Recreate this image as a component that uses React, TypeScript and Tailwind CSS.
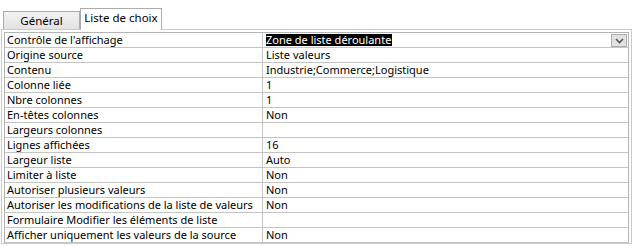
import React from "react";

const rows: [string, string][] = [
  ["Contrôle de l'affichage", "Zone de liste déroulante"],
  ["Origine source", "Liste valeurs"],
  ["Contenu", "Industrie;Commerce;Logistique"],
  ["Colonne liée", "1"],
  ["Nbre colonnes", "1"],
  ["En-têtes colonnes", "Non"],
  ["Largeurs colonnes", ""],
  ["Lignes affichées", "16"],
  ["Largeur liste", "Auto"],
  ["Limiter à liste", "Non"],
  ["Autoriser plusieurs valeurs", "Non"],
  ["Autoriser les modifications de la liste de valeurs", "Non"],
  ["Formulaire Modifier les éléments de liste", ""],
  ["Afficher uniquement les valeurs de la source", "Non"],
];

export default function App() {
  return (
    <div className="w-[638px] h-[246px] bg-white text-black text-[11px] leading-[14px] font-['Segoe_UI','Noto_Sans',sans-serif] overflow-hidden">
      <div className="flex items-end h-[29px] pl-[3px]">
        <div className="w-[77px] h-[18px] border border-b-0 border-[#acacac] bg-gradient-to-b from-[#f2f2f2] to-[#e3e3e3] flex items-center justify-center text-[11.5px]">
          Général
        </div>
        <div className="w-[82px] h-[22px] -mb-px relative z-10 border border-b-0 border-[#acacac] bg-white flex items-center justify-center pb-[3px] text-[11.5px]">
          Liste de choix
        </div>
      </div>
      <div className="ml-[1px] w-[631px] h-[215px] border border-[#c9c9c9] p-[2px]">
        <div className="border border-[#b4b4b4] border-b-0">
          {rows.map(([k, v], i) => (
            <div key={i} className="flex h-[15px] border-b border-[#c4c4c4]">
              <div className="w-[258px] h-[14px] shrink-0 border-r border-[#c4c4c4] pl-[2px] whitespace-nowrap">
                {k}
              </div>
              <div className="flex-1 h-[14px] pl-[3px] flex items-start whitespace-nowrap relative">
                {i === 0 ? (
                  <>
                    <span className="bg-black text-white pr-[1px] mt-[1px] leading-[12px]">{v}</span>
                    <div className="absolute right-[1px] top-[1px] w-[16px] h-[13px] border border-[#adadad] bg-[#e1e1e1] flex items-center justify-center">
                      <svg width="9" height="6" viewBox="0 0 9 6">
                        <path d="M1 1 L4.5 4.5 L8 1" stroke="#555" strokeWidth="1.6" fill="none" />
                      </svg>
                    </div>
                  </>
                ) : (
                  v
                )}
              </div>
            </div>
          ))}
        </div>
      </div>
    </div>
  );
}
